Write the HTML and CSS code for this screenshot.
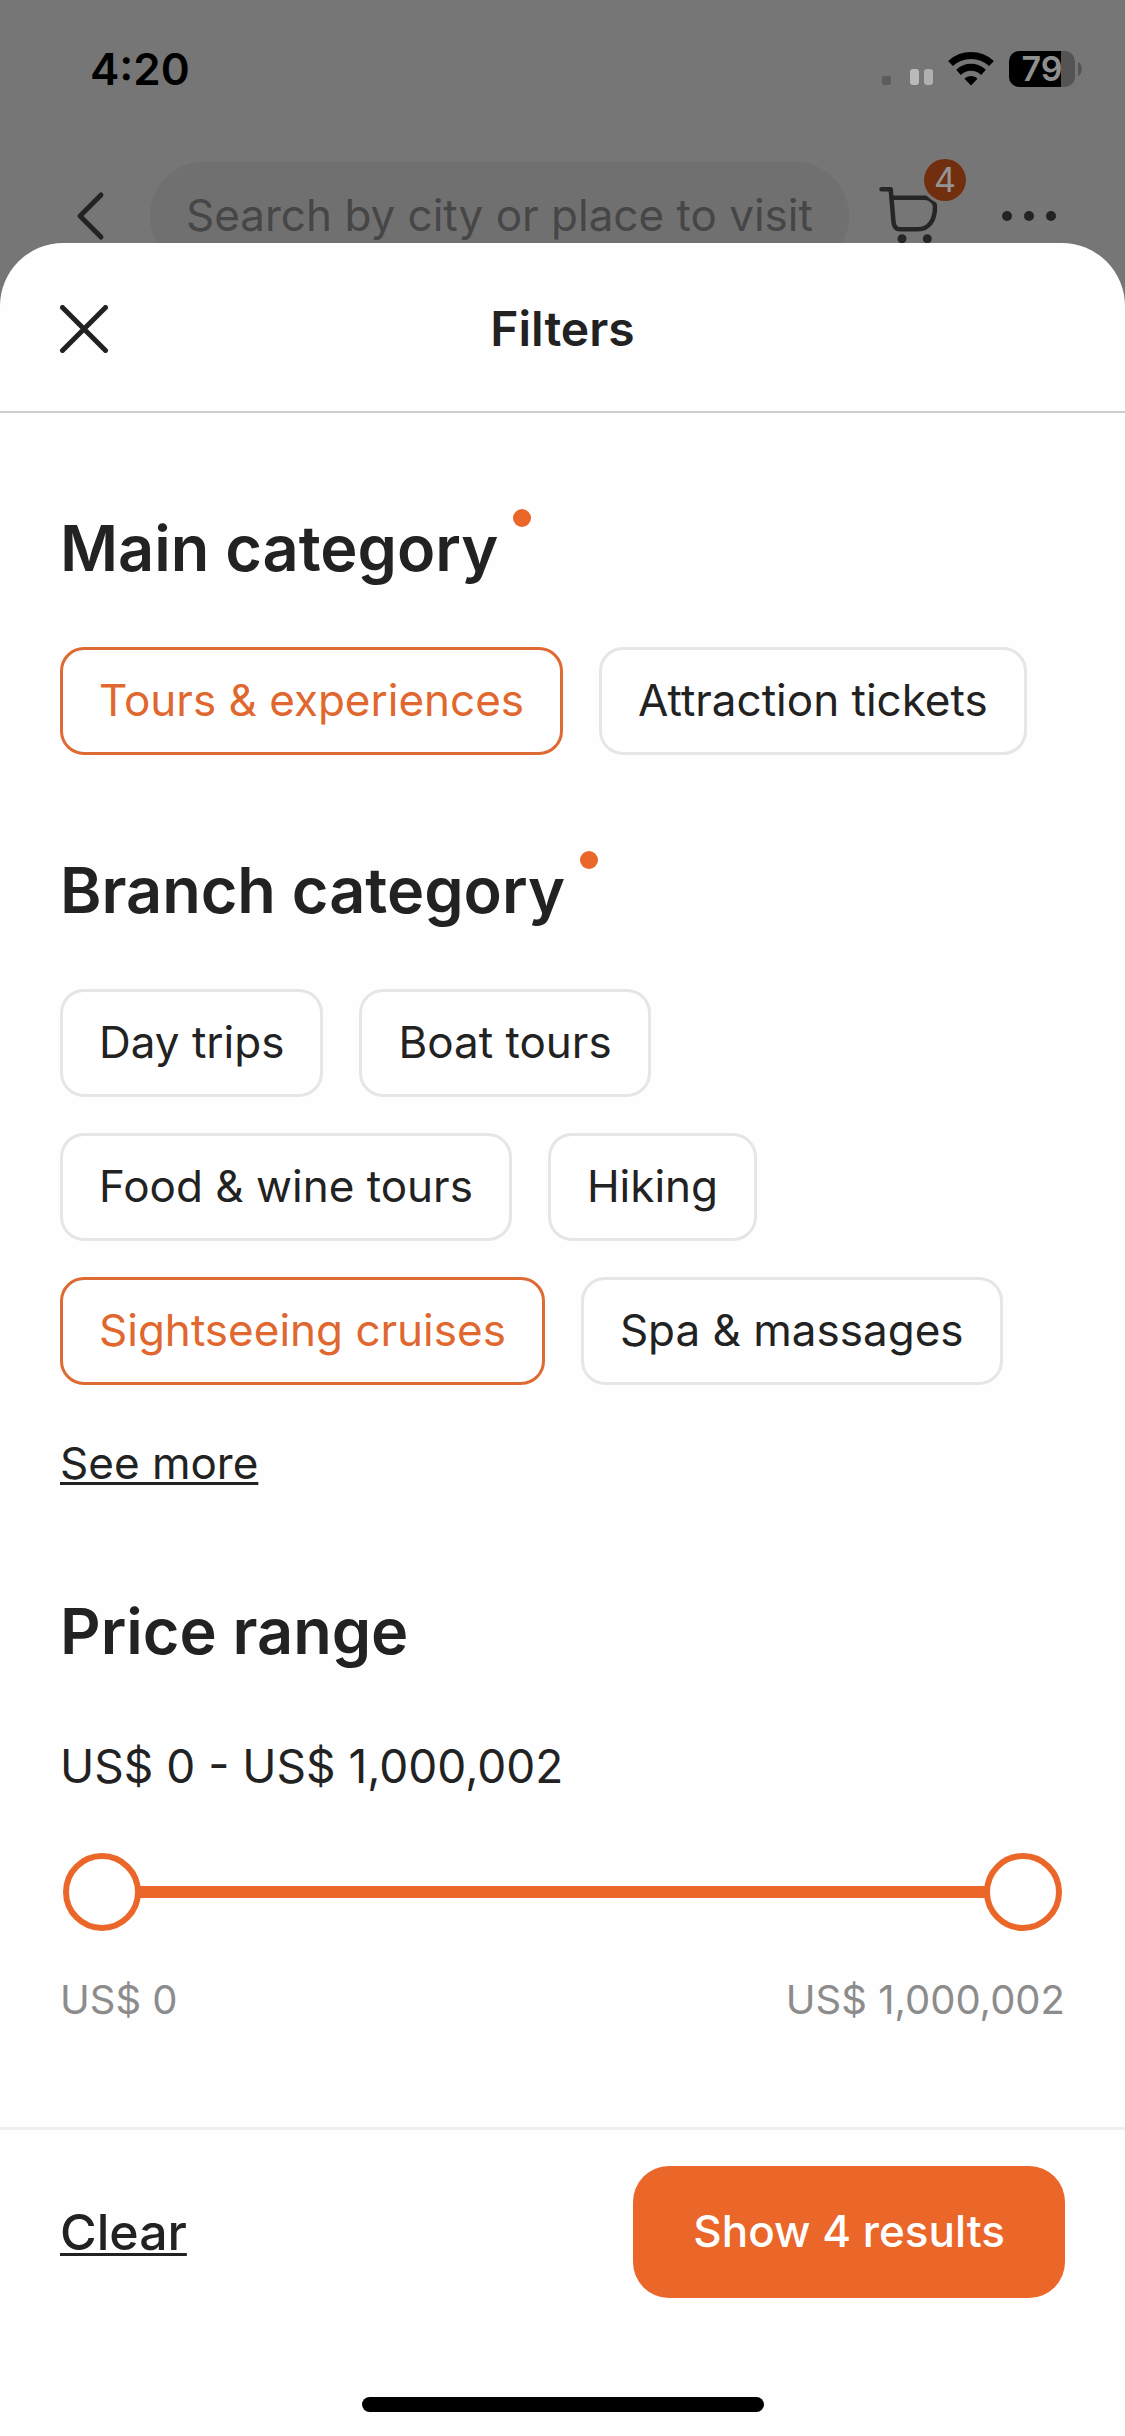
FILE: index.html
```html
<!DOCTYPE html>
<html lang="en">

<head>
    <meta charset="utf-8">
    <meta name="viewport" content="width=device-width, initial-scale=1">
    <title>Filters</title>
    <link rel="stylesheet" href="styles.css">
</head>

<body>
    <div class="status-bar">
        <span class="time">4:20</span>
        <div class="status-icons">
            <svg class="signal" width="51" height="36" viewBox="0 0 51 36">
                <rect x="0" y="25" width="9" height="9" rx="2" fill="#5c5c5c" />
                <rect x="28" y="18" width="9" height="16" rx="3" fill="#bababa" />
                <rect x="42" y="18" width="9" height="16" rx="3" fill="#b0b0b0" />
            </svg>
            <svg class="wifi" width="46" height="36" viewBox="0 0 46 36">
                <g fill="none" stroke="#000" stroke-width="7">
                    <path d="M2.500 12.500C14 1.800 32 1.800 43.500 12.500" />
                    <path d="M10.500 21.300C18 14.700 28 14.700 35.500 21.300" />
                </g>
                <path d="M23 34.500L16.500 27.800C20 24.200 26 24.200 29.500 27.800Z" fill="#000" />
            </svg>
            <div class="battery"><span>79</span></div>
            <svg class="battery-tip" width="4" height="14" viewBox="0 0 4 14">
                <path d="M0 0C5 2 5 12 0 14Z" fill="#545454" />
            </svg>
        </div>
    </div>

    <div class="app-bar">
        <button class="icon-button back" type="button" aria-label="Back">
            <svg width="60" height="60" viewBox="0 0 60 60">
                <path d="M41 9L20 30L41 51" fill="none" stroke="#232323" stroke-width="5" stroke-linecap="round" stroke-linejoin="round" />
            </svg>
        </button>
        <input class="search" type="text" aria-label="Search" placeholder="Search by city or place to visit">
        <button class="icon-button cart" type="button" aria-label="Cart">
            <svg width="60" height="60" viewBox="0 0 60 60">
                <path d="M2.500 3.300H11.700L14.500 36C15 41 17 43.300 21 43.300H39C50 43.300 56 34 56 20.700C56 18 55 16 52 14C50 12.400 49 11.700 46 11.700H13" fill="none" stroke="#262626" stroke-width="4.500" stroke-linecap="round" stroke-linejoin="round" />
                <circle cx="23" cy="52.700" r="4.500" fill="#262626" />
                <circle cx="48.300" cy="52.700" r="4.500" fill="#262626" />
            </svg>
            <span class="badge">4</span>
        </button>
        <button class="icon-button more" type="button" aria-label="More">
            <svg width="60" height="60" viewBox="0 0 60 60" fill="#232323">
                <circle cx="8" cy="30" r="5" />
                <circle cx="30" cy="30" r="5" />
                <circle cx="52" cy="30" r="5" />
            </svg>
        </button>
    </div>

    <form class="sheet">
        <div class="sheet-header">
            <button class="icon-button close" type="button" aria-label="Close">
                <svg width="48" height="48" viewBox="0 0 48 48">
                    <path d="M2.500 2.500L45.500 45.500M45.500 2.500L2.500 45.500" fill="none" stroke="#222" stroke-width="5" stroke-linecap="round" />
                </svg>
            </button>
            <h1 class="sheet-title">Filters</h1>
        </div>

        <div class="sheet-content">
            <h2 class="section-title">Main category<span class="dot"></span></h2>
            <div class="chips">
                <button class="chip selected" type="button">Tours &amp; experiences</button>
                <button class="chip" type="button">Attraction tickets</button>
            </div>

            <h2 class="section-title">Branch category<span class="dot"></span></h2>
            <div class="chips">
                <button class="chip" type="button">Day trips</button>
                <button class="chip" type="button">Boat tours</button>
            </div>
            <div class="chips">
                <button class="chip" type="button">Food &amp; wine tours</button>
                <button class="chip" type="button">Hiking</button>
            </div>
            <div class="chips">
                <button class="chip selected" type="button">Sightseeing cruises</button>
                <button class="chip" type="button">Spa &amp; massages</button>
            </div>
            <a class="see-more" href="#">See more</a>

            <h2 class="section-title">Price range</h2>
            <p class="price">US$ 0 - US$ 1,000,002</p>
            <div class="slider">
                <input type="range" min="0" max="1000002" value="0" aria-label="Minimum price">
                <input type="range" min="0" max="1000002" value="1000002" aria-label="Maximum price">
            </div>
            <div class="limits">
                <span>US$ 0</span>
                <span>US$ 1,000,002</span>
            </div>
        </div>

        <div class="sheet-footer">
            <a class="clear" href="#">Clear</a>
            <button class="submit" type="submit">Show 4 results</button>
        </div>
        <div class="home-indicator"></div>
    </form>
</body>

</html>
```
FILE: styles.css
```css
* {
    box-sizing: border-box;
}

body {
    display: flex;
    flex-direction: column;
    min-height: 100vh;
    margin: 0;
    background-color: #767676;
    color: #222222;
    font-family: Inter, "Liberation Sans", sans-serif;
}

button,
input {
    font-family: inherit;
}

/* Status bar */
.status-bar {
    display: flex;
    justify-content: space-between;
    align-items: center;
    height: 162px;
    padding: 0 43px 24px 90px;
    color: #000000;
}

.time {
    font-size: 44px;
    font-weight: 600;
}

.status-icons {
    display: flex;
    align-items: center;
}

.wifi {
    margin: 0 15px;
}

.battery {
    width: 66px;
    height: 36px;
    border-radius: 10px;
    background: linear-gradient(to right, #000000 52px, #545454 52px);
    color: #8f8f8f;
    font-size: 34px;
    font-weight: 600;
    line-height: 36px;
    text-align: center;
}

.battery-tip {
    margin-left: 3px;
}

/* App bar behind the sheet */
.app-bar {
    display: flex;
    gap: 30px;
    height: 108px;
    padding: 0 36px 0 60px;
}

.icon-button {
    display: flex;
    justify-content: center;
    align-items: center;
    padding: 0;
    border: none;
    background: none;
}

.search {
    flex: 1;
    min-width: 0;
    padding: 0 36px 3px;
    border: none;
    border-radius: 54px;
    background-color: #707070;
    font-size: 44px;
}

.search::placeholder {
    color: #464646;
    opacity: 1;
}

.cart {
    position: relative;
}

.badge {
    position: absolute;
    top: -3px;
    right: -27px;
    width: 42px;
    height: 42px;
    border-radius: 50%;
    box-shadow: 0 0 0 3px #767676;
    background-color: #722f0f;
    color: #949494;
    font-size: 34px;
    line-height: 42px;
    text-align: center;
}

.more {
    width: 120px;
}

/* Sheet */
.sheet {
    position: relative;
    display: flex;
    flex: 1;
    flex-direction: column;
    margin-top: -27px;
    border-radius: 63px 63px 0 0;
    background-color: #fefefe;
}

.sheet-header {
    display: grid;
    grid-template-columns: 48px 1fr 48px;
    align-items: center;
    height: 170px;
    padding: 3px 60px 0;
    border-bottom: 2px solid #cfcfcf;
}

.sheet-title {
    margin: 0;
    font-size: 48px;
    font-weight: 600;
    line-height: 72px;
    text-align: center;
}

.sheet-content {
    flex: 1;
    padding: 0 60px;
}

.section-title {
    display: flex;
    margin: 93px 0 57px;
    font-size: 63px;
    font-weight: 600;
    line-height: 84px;
}

.dot {
    width: 18px;
    height: 18px;
    margin: 3px 0 0 15px;
    border-radius: 50%;
    background-color: #eb6629;
}

.chips {
    display: flex;
    gap: 36px;
    margin-bottom: 36px;
}

.chip {
    height: 108px;
    padding: 0 36px 3px;
    border: 3px solid #e6e6e6;
    border-radius: 24px;
    background-color: #ffffff;
    color: #222222;
    font-size: 44px;
}

.chip.selected {
    border-color: #de6a34;
    color: #e0682f;
}

.see-more {
    display: inline-block;
    margin-top: 9px;
    color: #222222;
    font-size: 44px;
    line-height: 66px;
}

.see-more,
.clear {
    text-decoration-thickness: 3px;
    text-underline-offset: 3px;
    text-decoration-skip-ink: none;
}

.price {
    margin: 0 0 51px;
    font-size: 46px;
    line-height: 72px;
}

.slider {
    position: relative;
    height: 78px;
    margin: 0 3px 36px;
    background: linear-gradient(#eb6629, #eb6629) center / calc(100% - 78px) 12px no-repeat;
}

/* both thumbs share one track */
.slider input {
    position: absolute;
    width: 100%;
    height: 78px;
    margin: 0;
    background: none;
    pointer-events: none;
    appearance: none;
    -webkit-appearance: none;
}

.slider input::-webkit-slider-thumb {
    width: 78px;
    height: 78px;
    border: 6px solid #eb6629;
    border-radius: 50%;
    background-color: #ffffff;
    pointer-events: auto;
    appearance: none;
    -webkit-appearance: none;
}

.limits {
    display: flex;
    justify-content: space-between;
    color: #8c8c8c;
    font-size: 40px;
    line-height: 66px;
}

.sheet-footer {
    display: flex;
    justify-content: space-between;
    align-items: center;
    padding: 36px 60px 99px;
    border-top: 3px solid #eeeeee;
}

.clear {
    color: #222222;
    font-size: 50px;
    font-weight: 500;
}

.submit {
    height: 132px;
    padding: 0 60px 3px;
    border: none;
    border-radius: 36px;
    background-color: #eb6629;
    color: #ffffff;
    font-size: 44px;
    font-weight: 500;
}

.home-indicator {
    align-self: center;
    width: 402px;
    height: 15px;
    margin-bottom: 24px;
    border-radius: 8px;
    background-color: #000000;
}
```
